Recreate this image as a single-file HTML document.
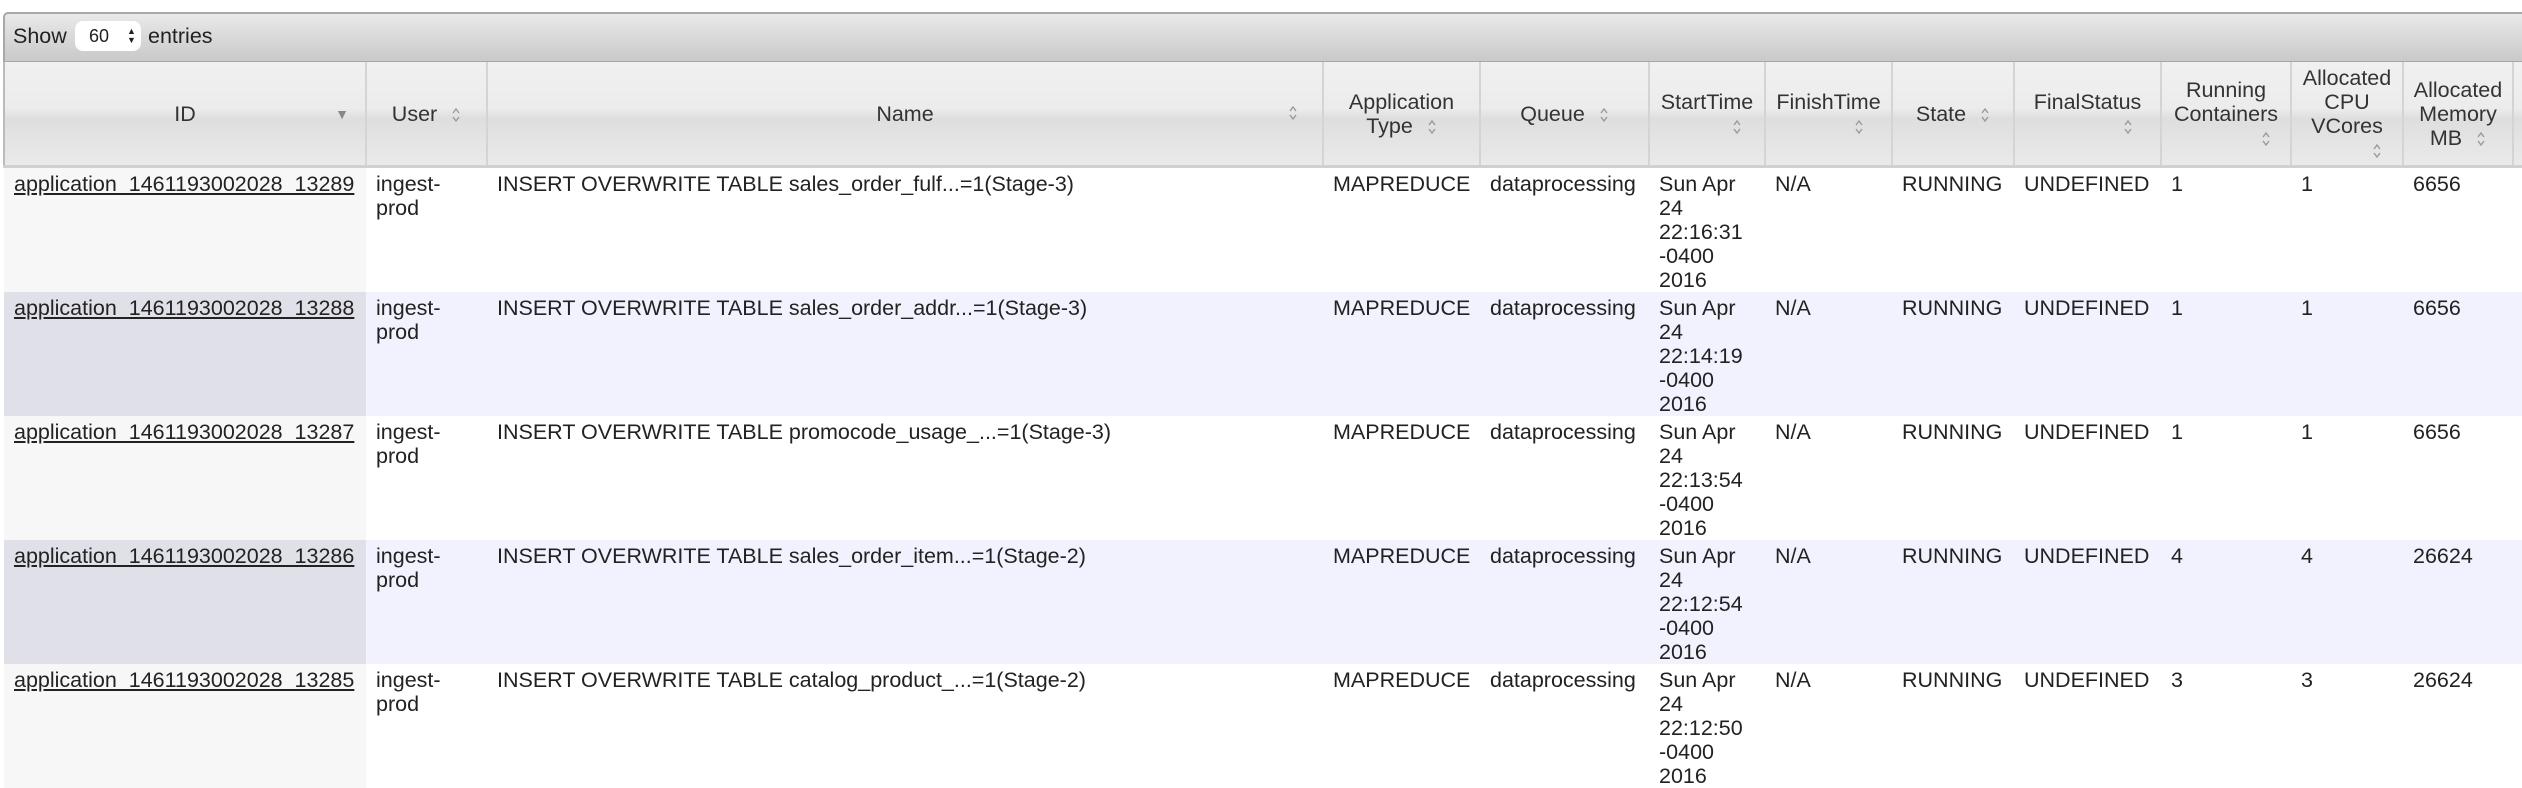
<!DOCTYPE html>
<html><head><meta charset="utf-8"><style>
html,body{margin:0;padding:0;width:2522px;height:744px;overflow:hidden;background:#fff;font-family:"Liberation Sans",Arial,sans-serif;color:#222}
.bar{position:absolute;left:3px;top:12px;width:2530px;height:47px;border:2px solid #a8a8a8;border-right:none;border-radius:5px 0 0 0;background:linear-gradient(#e9e9e9,#d9d9d9 50%,#c9c9c9);font-size:21.5px;}
.bar .t{position:absolute;top:10px;}
.sel{position:absolute;left:70px;top:7px;width:66px;height:30px;background:#fff;border-radius:8px;font-size:18px;}
.sel span{position:absolute;left:14px;top:5px}
.sel i{position:absolute;left:52px;top:6px;font-style:normal;font-size:9px;line-height:9px}
table{position:absolute;left:3px;top:62px;border-collapse:collapse;table-layout:fixed;width:2640px;font-size:21.5px}
th{position:relative;height:103px;padding:0 4px;background:linear-gradient(#f0f0f0,#ececec 45%,#dedede 55%,#eaeaea);border:2px solid #d4d4d4;border-top:none;border-bottom:3px solid #d0d0d0;font-weight:normal;color:#333;line-height:24px;text-align:center;vertical-align:middle}
th svg{display:inline-block;margin-left:14px;vertical-align:middle}
th .ab{position:absolute;right:24px;top:42px;margin:0}
td{height:120px;padding:4px 10px 0 10px;vertical-align:top;line-height:24px;color:#222;overflow:hidden}
tr.o td{background:#fff}tr.o td.id{background:#f7f7f7}
tr.e td{background:#f2f2fe}tr.e td.id{background:#e0e0e8}
a{color:#222;text-decoration:underline}
</style></head><body>
<svg width="0" height="0" style="position:absolute"><defs><symbol id="s" viewBox="0 0 10 18"><path d="M2 7 L5 3 L8 7 M2 11 L5 15 L8 11" fill="none" stroke="#999" stroke-width="1.4"/></symbol></defs></svg>
<div class="bar"><span class="t" style="left:8px">Show</span><div class="sel"><span>60</span><i>▲<br>▼</i></div><span class="t" style="left:143px">entries</span></div>
<table>
<colgroup><col style="width:362px"><col style="width:121px"><col style="width:836px"><col style="width:157px"><col style="width:169px"><col style="width:116px"><col style="width:127px"><col style="width:122px"><col style="width:147px"><col style="width:130px"><col style="width:112px"><col style="width:110px"><col style="width:131px"></colgroup>
<tr><th style="border-left:2px solid #bbb">ID<span style="position:absolute;right:16px;top:40px;font-size:14px;color:#888">▼</span></th><th>User<svg width="10" height="18"><use href="#s"/></svg></th><th>Name<svg class="ab" width="10" height="18"><use href="#s"/></svg></th><th>Application Type<svg width="10" height="18"><use href="#s"/></svg></th><th>Queue<svg width="10" height="18"><use href="#s"/></svg></th><th>StartTime<br><svg width="10" height="18" style="margin-left:60px"><use href="#s"/></svg></th><th>FinishTime<br><svg width="10" height="18" style="margin-left:60px"><use href="#s"/></svg></th><th>State<svg width="10" height="18"><use href="#s"/></svg></th><th>FinalStatus<br><svg width="10" height="18" style="margin-left:80px"><use href="#s"/></svg></th><th>Running Containers<br><svg width="10" height="18" style="margin-left:80px"><use href="#s"/></svg></th><th>Allocated CPU VCores<br><svg width="10" height="18" style="margin-left:60px"><use href="#s"/></svg></th><th>Allocated Memory MB<svg width="10" height="18"><use href="#s"/></svg></th><th></th></tr>
<tr class="o"><td class="id"><a>application_1461193002028_13289</a></td><td>ingest-<br>prod</td><td>INSERT OVERWRITE TABLE sales_order_fulf...=1(Stage-3)</td><td>MAPREDUCE</td><td>dataprocessing</td><td>Sun Apr<br>24<br>22:16:31<br>-0400<br>2016</td><td>N/A</td><td>RUNNING</td><td>UNDEFINED</td><td>1</td><td>1</td><td>6656</td><td></td></tr>
<tr class="e"><td class="id"><a>application_1461193002028_13288</a></td><td>ingest-<br>prod</td><td>INSERT OVERWRITE TABLE sales_order_addr...=1(Stage-3)</td><td>MAPREDUCE</td><td>dataprocessing</td><td>Sun Apr<br>24<br>22:14:19<br>-0400<br>2016</td><td>N/A</td><td>RUNNING</td><td>UNDEFINED</td><td>1</td><td>1</td><td>6656</td><td></td></tr>
<tr class="o"><td class="id"><a>application_1461193002028_13287</a></td><td>ingest-<br>prod</td><td>INSERT OVERWRITE TABLE promocode_usage_...=1(Stage-3)</td><td>MAPREDUCE</td><td>dataprocessing</td><td>Sun Apr<br>24<br>22:13:54<br>-0400<br>2016</td><td>N/A</td><td>RUNNING</td><td>UNDEFINED</td><td>1</td><td>1</td><td>6656</td><td></td></tr>
<tr class="e"><td class="id"><a>application_1461193002028_13286</a></td><td>ingest-<br>prod</td><td>INSERT OVERWRITE TABLE sales_order_item...=1(Stage-2)</td><td>MAPREDUCE</td><td>dataprocessing</td><td>Sun Apr<br>24<br>22:12:54<br>-0400<br>2016</td><td>N/A</td><td>RUNNING</td><td>UNDEFINED</td><td>4</td><td>4</td><td>26624</td><td></td></tr>
<tr class="o"><td class="id"><a>application_1461193002028_13285</a></td><td>ingest-<br>prod</td><td>INSERT OVERWRITE TABLE catalog_product_...=1(Stage-2)</td><td>MAPREDUCE</td><td>dataprocessing</td><td>Sun Apr<br>24<br>22:12:50<br>-0400<br>2016</td><td>N/A</td><td>RUNNING</td><td>UNDEFINED</td><td>3</td><td>3</td><td>26624</td><td></td></tr>
</table>
</body></html>
